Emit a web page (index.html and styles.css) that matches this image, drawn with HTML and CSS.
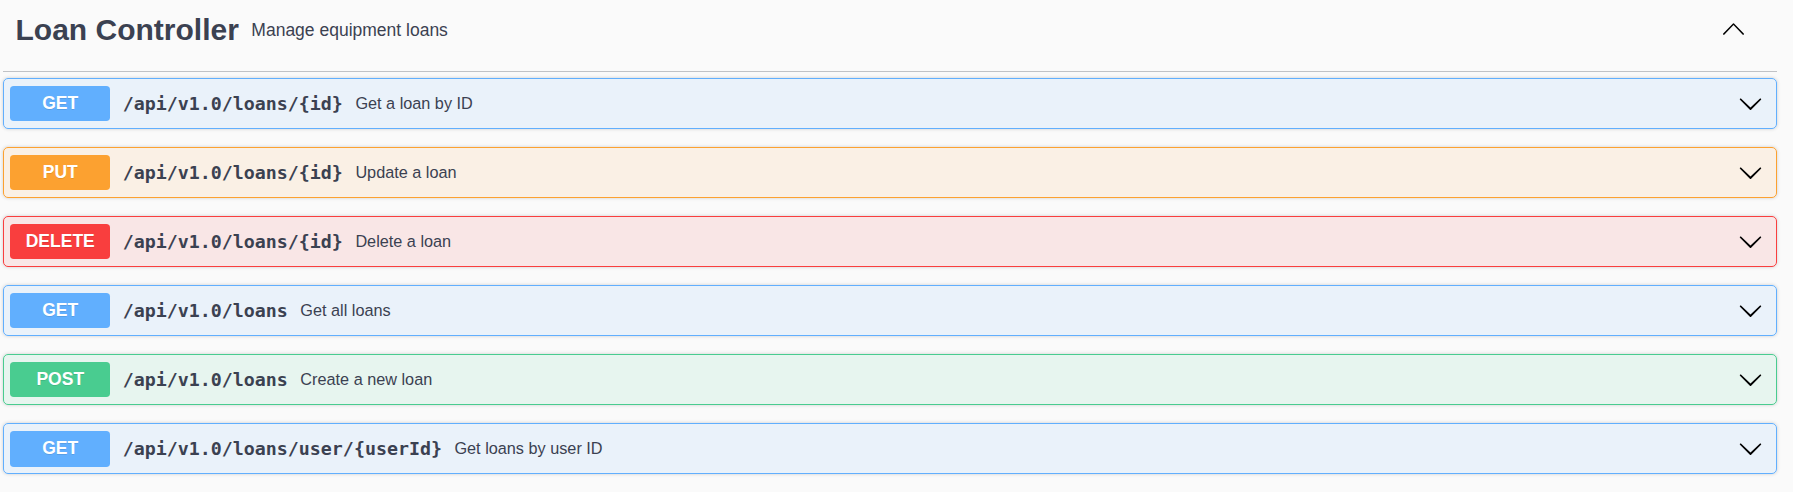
FILE: index.html
```html
<!DOCTYPE html>
<html lang="en">
<head>
<meta charset="utf-8">
<title>Loan Controller</title>
<link rel="stylesheet" href="styles.css">
</head>
<body>
<div class="wrapper">
  <div class="tag">
    <h3 class="tag-title">Loan Controller</h3>
    <small class="tag-desc">Manage equipment loans</small>
    <svg class="tag-arrow" viewBox="0 0 20 20" width="25" height="25" aria-hidden="true"><path d="M17.418 14.908c.228.243.582.243.81 0 .228-.243.228-.627 0-.87L10.405 5.902a.578.578 0 0 0-.81 0L1.772 14.038c-.228.243-.228.627 0 .87.228.243.582.243.81 0L10 7.275l7.418 7.633z"/></svg>
  </div>

  <div class="opblock get">
    <span class="method">GET</span>
    <span class="path">/api/v1.0/loans/{id}</span>
    <span class="desc">Get a loan by ID</span>
    <svg class="arrow" viewBox="0 0 20 20" width="25" height="25" aria-hidden="true"><path d="M17.418 6.109c.272-.268.709-.268.979 0s.271.701 0 .969l-7.908 7.83c-.27.268-.707.268-.979 0l-7.908-7.83c-.27-.268-.27-.701 0-.969.271-.268.709-.268.979 0L10 13.25l7.418-7.141z"/></svg>
  </div>

  <div class="opblock put">
    <span class="method">PUT</span>
    <span class="path">/api/v1.0/loans/{id}</span>
    <span class="desc">Update a loan</span>
    <svg class="arrow" viewBox="0 0 20 20" width="25" height="25" aria-hidden="true"><path d="M17.418 6.109c.272-.268.709-.268.979 0s.271.701 0 .969l-7.908 7.83c-.27.268-.707.268-.979 0l-7.908-7.83c-.27-.268-.27-.701 0-.969.271-.268.709-.268.979 0L10 13.25l7.418-7.141z"/></svg>
  </div>

  <div class="opblock delete">
    <span class="method">DELETE</span>
    <span class="path">/api/v1.0/loans/{id}</span>
    <span class="desc">Delete a loan</span>
    <svg class="arrow" viewBox="0 0 20 20" width="25" height="25" aria-hidden="true"><path d="M17.418 6.109c.272-.268.709-.268.979 0s.271.701 0 .969l-7.908 7.83c-.27.268-.707.268-.979 0l-7.908-7.83c-.27-.268-.27-.701 0-.969.271-.268.709-.268.979 0L10 13.25l7.418-7.141z"/></svg>
  </div>

  <div class="opblock get">
    <span class="method">GET</span>
    <span class="path">/api/v1.0/loans</span>
    <span class="desc">Get all loans</span>
    <svg class="arrow" viewBox="0 0 20 20" width="25" height="25" aria-hidden="true"><path d="M17.418 6.109c.272-.268.709-.268.979 0s.271.701 0 .969l-7.908 7.83c-.27.268-.707.268-.979 0l-7.908-7.83c-.27-.268-.27-.701 0-.969.271-.268.709-.268.979 0L10 13.25l7.418-7.141z"/></svg>
  </div>

  <div class="opblock post">
    <span class="method">POST</span>
    <span class="path">/api/v1.0/loans</span>
    <span class="desc">Create a new loan</span>
    <svg class="arrow" viewBox="0 0 20 20" width="25" height="25" aria-hidden="true"><path d="M17.418 6.109c.272-.268.709-.268.979 0s.271.701 0 .969l-7.908 7.83c-.27.268-.707.268-.979 0l-7.908-7.83c-.27-.268-.27-.701 0-.969.271-.268.709-.268.979 0L10 13.25l7.418-7.141z"/></svg>
  </div>

  <div class="opblock get">
    <span class="method">GET</span>
    <span class="path">/api/v1.0/loans/user/{userId}</span>
    <span class="desc">Get loans by user ID</span>
    <svg class="arrow" viewBox="0 0 20 20" width="25" height="25" aria-hidden="true"><path d="M17.418 6.109c.272-.268.709-.268.979 0s.271.701 0 .969l-7.908 7.83c-.27.268-.707.268-.979 0l-7.908-7.83c-.27-.268-.27-.701 0-.969.271-.268.709-.268.979 0L10 13.25l7.418-7.141z"/></svg>
  </div>
</div>
</body>
</html>
```

FILE: styles.css
```css
html, body {
  margin: 0;
  padding: 0;
  background: #fafafa;
}

body {
  font-family: "Liberation Sans", Arial, sans-serif;
  color: #3b4151;
}

.wrapper {
  width: 1774px;
  padding-left: 3px;
}

.tag {
  display: flex;
  align-items: center;
  box-sizing: border-box;
  height: 72px;
  padding: 0 31px 11px 12.5px;
  border-bottom: 1px solid rgba(59, 65, 81, 0.3);
  margin-bottom: 6.25px;
}

.tag-title {
  margin: 0;
  font-size: 30px;
  font-weight: 700;
  line-height: normal;
  color: #3b4151;
}

.tag-desc {
  flex: 1;
  padding: 0 12.5px;
  font-size: 17.5px;
  color: #3b4151;
}

.tag-arrow {
  flex: none;
  fill: #000;
  margin-top: -3px;
}

.opblock {
  display: flex;
  align-items: center;
  padding: 6.25px;
  margin-bottom: 18.75px;
  border: 1px solid;
  border-radius: 5px;
  box-shadow: 0 0 3.75px rgba(0, 0, 0, 0.19);
}

.method {
  flex: none;
  min-width: 100px;
  padding: 7.5px 0;
  border-radius: 3.75px;
  text-align: center;
  font-size: 17.5px;
  line-height: 20.8px;
  font-weight: 700;
  color: #fff;
  text-shadow: 0 1px 0 rgba(0, 0, 0, 0.1);
}

.path {
  padding: 0 12.5px;
  font-family: "DejaVu Sans Mono", "Liberation Mono", monospace;
  font-size: 18.3px;
  font-weight: 700;
  color: #3b4151;
}

.desc {
  flex: 1;
  font-size: 16.25px;
  color: #3b4151;
}

.arrow {
  flex: none;
  fill: #000;
  margin-right: 6.5px;
}

.get {
  background: rgba(97, 175, 254, 0.1);
  border-color: #61affe;
}
.get .method { background: #61affe; }

.put {
  background: rgba(252, 161, 48, 0.1);
  border-color: #fca130;
}
.put .method { background: #fca130; }

.delete {
  background: rgba(249, 62, 62, 0.1);
  border-color: #f93e3e;
}
.delete .method { background: #f93e3e; }

.post {
  background: rgba(73, 204, 144, 0.1);
  border-color: #49cc90;
}
.post .method { background: #49cc90; }
```
